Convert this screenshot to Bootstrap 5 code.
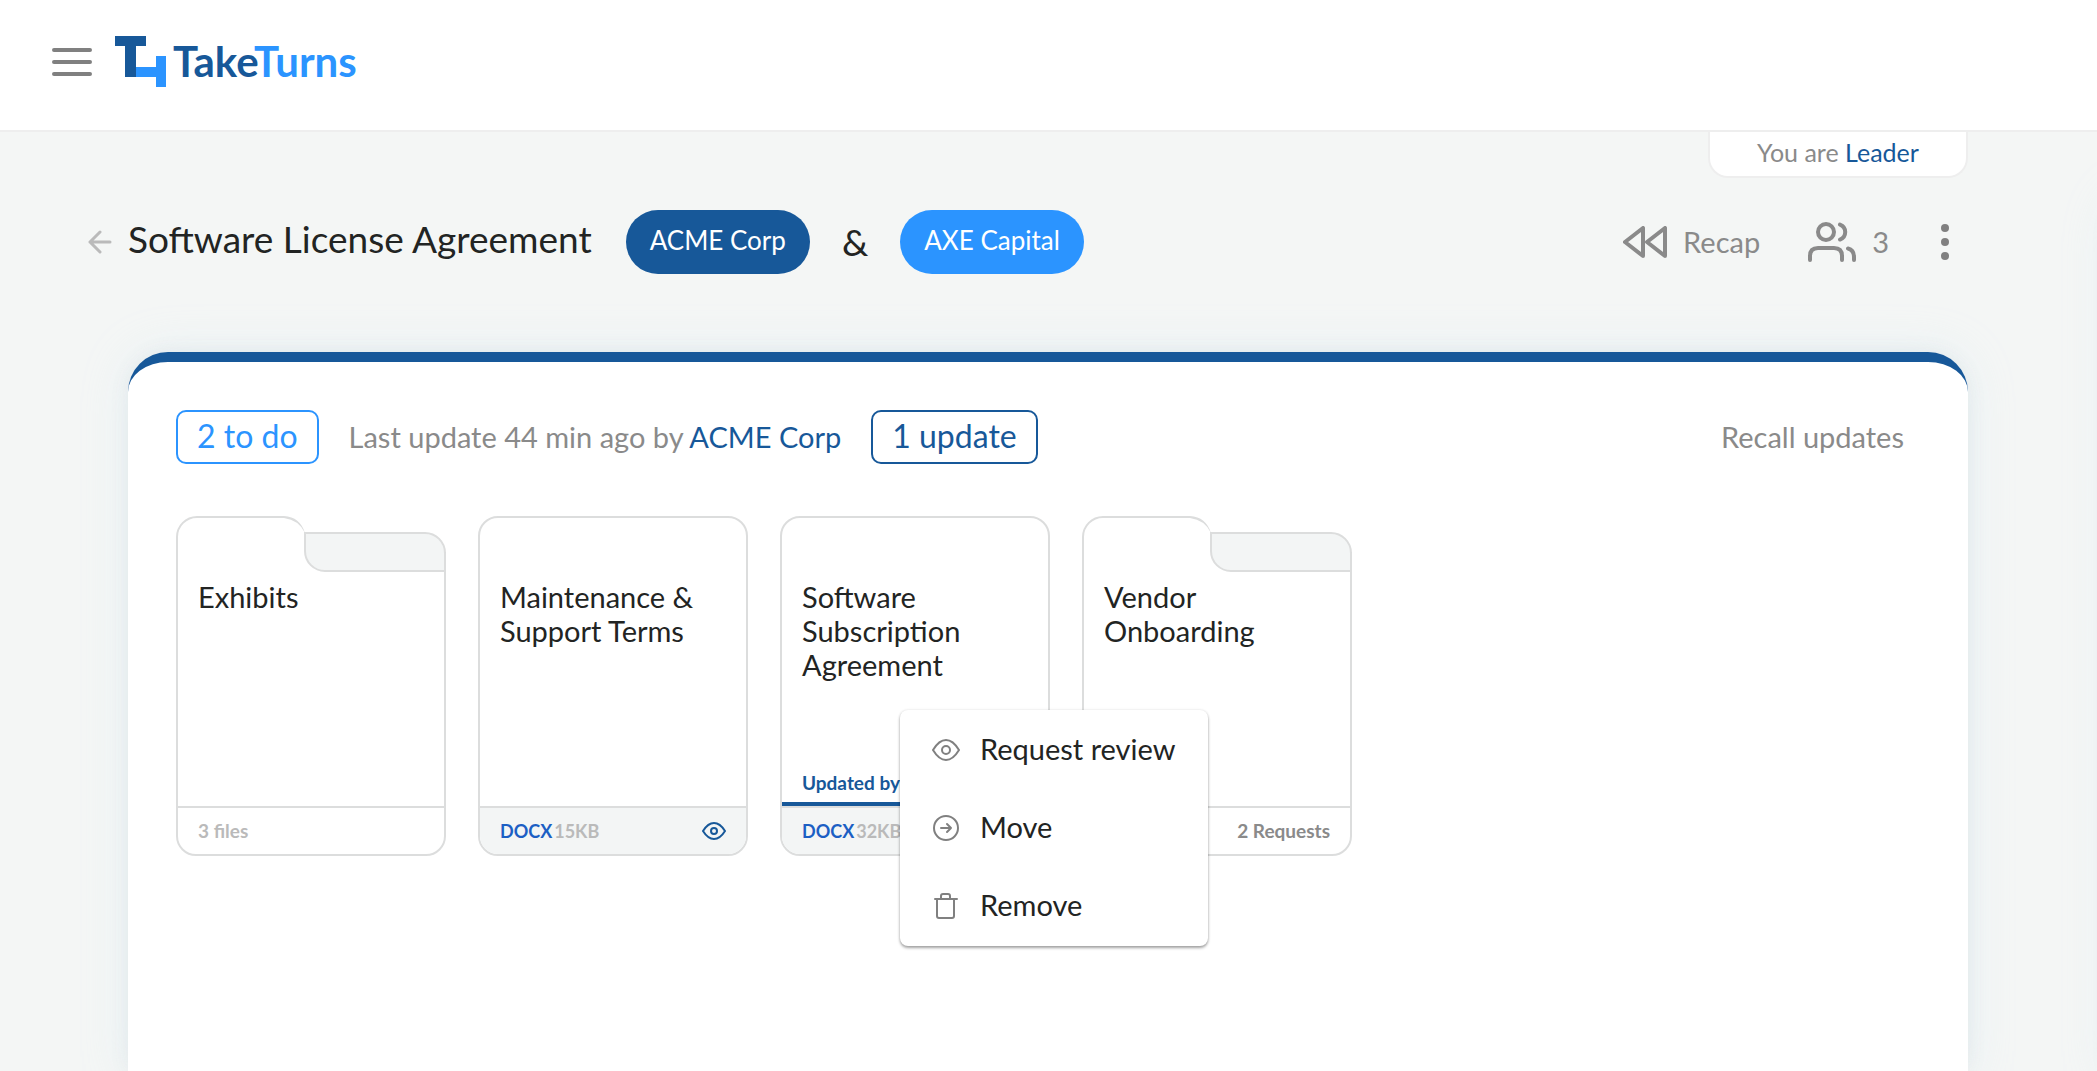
<!DOCTYPE html>
<html lang="en">
<head>
<meta charset="utf-8">
<meta name="viewport" content="width=device-width, initial-scale=1">
<title>TakeTurns - Software License Agreement</title>
<link href="https://cdn.jsdelivr.net/npm/bootstrap@5.3.0/dist/css/bootstrap.min.css" rel="stylesheet">
<style>
:root{--navy:#175899;--sky:#2b94ff;--ink:#222423;--grey:#8a8a8a;--pale:#bababa;--line:#dcdddd;--page:#f4f6f5;--halo:0 0 20px rgba(110,110,100,.08),0 0 44px rgba(225,240,248,.7)}
body{background:var(--page);color:var(--ink);font-family:Lato,"Open Sans",sans-serif;font-size:29px;line-height:34px}
main{position:relative;overflow:hidden}
/* halo of the next board, waiting beyond the right edge */
main::after{content:"";position:absolute;left:calc(100% + 12px);top:60px;bottom:0;width:80px;border-radius:40px 0 0 0;box-shadow:var(--halo)}
a{color:inherit;text-decoration:none}
svg{display:block;flex:none}
.line-icon{fill:none;stroke:currentColor;stroke-linecap:round;stroke-linejoin:round}
.plain{background:none;border:0;padding:0;color:inherit}
.navy{color:var(--navy)}
.soft{color:var(--grey)}
.steel{color:#808080}
.topbar{height:132px;border-bottom:2px solid #eee;padding:0 52px 6px}
.brand-link{gap:7px;margin-left:23px;padding-bottom:2px}
.brand-text{font-size:42px;line-height:48px;font-weight:700;color:var(--navy)}
.brand-text span{color:var(--sky)}
.gutter{padding-left:128px;padding-right:129px}
.role-tab{width:260px;height:46px;border:2px solid #eee;border-top:0;border-radius:0 0 20px 20px;font-size:25px;padding-bottom:4px}
.title-row{padding:32px 144px 0 88px}
.deal-title{font-size:37px;line-height:44px;font-weight:400;padding-bottom:6px;margin-right:34px}
.party{height:64px;border-radius:32px;padding:0 23px 4px;font-size:26px;color:#fff}
.party-navy,.party-navy:hover{background:var(--navy);color:#fff}
.party-sky,.party-sky:hover{background:var(--sky);color:#fff}
.amp{font-size:37px}
.board{margin-top:78px;border-top:10px solid var(--navy);border-radius:40px 40px 0 0;padding:48px 48px 0;box-shadow:var(--halo)}
.tag{height:54px;border:2px solid;border-radius:10px;background:#fff;padding:0 19px 2px;font-size:32px;line-height:40px}
.tag-sky{color:var(--sky)}
.status-text{margin:0 30px}
.files{gap:32px;margin-top:52px}
.doc{width:270px;height:340px;border:2px solid var(--line);border-radius:20px;position:relative}
.doc-body{padding:62px 20px 0}
.doc-foot{height:48px;border-top:2px solid var(--line);padding:0 20px;font-size:19px;font-weight:700;border-radius:0 0 18px 18px}
.filled{background:#f3f5f5;font-size:18px;gap:2px}
.pale{color:var(--pale)}
.docx{color:#1c5fc4}
.updated{font-size:19px;font-weight:700;line-height:24px;padding:0 20px 7px;border-bottom:4px solid var(--navy)}
/* the raised left part and the lowered right part of a folder's top edge */
.flap{position:absolute;left:-2px;top:-2px}
.ctx{position:absolute;left:118px;top:192px;width:308px;padding:1px 0;border:0;border-radius:8px;box-shadow:0 2px 3px rgba(0,0,0,.35),0 0 3px rgba(0,0,0,.1);z-index:5;font-size:29px}
.ctx .dropdown-item{height:78px;padding:0 32px;gap:20px;color:var(--ink)}
.ctx .dropdown-item span{padding-bottom:2px}
.ctx .dropdown-item:hover{background:#f4f6f5}
</style>
<script src="https://cdn.jsdelivr.net/npm/bootstrap@5.3.0/dist/js/bootstrap.bundle.min.js"></script>
</head>
<body class="d-flex flex-column min-vh-100">
<header class="topbar bg-white d-flex align-items-center">
  <button class="plain steel" aria-label="Menu"><svg class="line-icon" width="40" height="28" viewBox="0 0 40 28" stroke-width="4"><path d="M2 2H38M2 14H38M2 26H38"/></svg></button>
  <a href="#" class="brand-link d-flex align-items-center" aria-label="TakeTurns home">
    <svg width="51" height="51" viewBox="0 0 51 51"><path d="M10 31H41V20H51V51H41V41H10Z" fill="#2b94ff"/><path d="M0 0H31V10H21V41H10V10H0Z" fill="#175899"/></svg>
    <span class="brand-text">Take<span>Turns</span></span>
  </a>
</header>
<main class="d-flex flex-column flex-grow-1">
  <div class="gutter d-flex justify-content-end">
    <div class="role-tab bg-white soft d-flex align-items-center justify-content-center"><span>You are <a href="#" class="navy">Leader</a></span></div>
  </div>
  <div class="title-row d-flex align-items-center">
    <a href="#" aria-label="Back" class="pale"><svg class="line-icon" width="24" height="24" viewBox="0 0 24 24" stroke-width="3"><path d="M22 12H2M12 2 2 12 12 22"/></svg></a>
    <h1 class="deal-title mb-0 ms-3">Software License Agreement</h1>
    <button class="btn party party-navy">ACME Corp</button>
    <span class="amp mx-4 px-2">&amp;</span>
    <button class="btn party party-sky">AXE Capital</button>
    <div class="d-flex align-items-center ms-auto soft">
      <button class="plain d-flex align-items-center"><svg class="line-icon" width="44" height="32" viewBox="0 0 44 32" stroke-width="4"><path d="M20 2V30L2 16ZM42 2V30L24 16Z"/></svg><span class="ms-3">Recap</span></button>
      <button class="plain d-flex align-items-center ms-5"><svg class="line-icon" width="48" height="40" viewBox="0 0 48 40" stroke-width="4"><circle cx="18" cy="10" r="8"/><path d="M2 38V34Q2 26 10 26H26Q34 26 34 34V38M32 2.500A8 8 0 0 1 32 17.500M40 26.500Q46 28 46 35V38"/></svg><span class="ms-3">3</span></button>
      <button class="plain ms-5 px-1 steel" aria-label="More"><svg width="8" height="36" viewBox="0 0 8 36" fill="#808080"><circle cx="4" cy="4" r="4"/><circle cx="4" cy="18" r="4"/><circle cx="4" cy="32" r="4"/></svg></button>
    </div>
  </div>
  <div class="gutter d-flex flex-column flex-grow-1">
    <section class="board bg-white flex-grow-1">
      <div class="d-flex align-items-center">
        <button class="tag tag-sky">2 to do</button>
        <span class="status-text soft">Last update 44 min ago by <a href="#" class="navy">ACME Corp</a></span>
        <button class="tag navy">1 update</button>
        <button class="plain soft ms-auto me-3">Recall updates</button>
      </div>
      <div class="files d-flex flex-wrap">
        <article class="doc d-flex flex-column">
          <div class="flap"><svg width="270" height="60" viewBox="0 0 270 60"><path d="M0 0H270V36H0Z" fill="#fff"/><path d="M1 37V21A20 20 0 0 1 21 1H108" fill="none" stroke="#dcdddd" stroke-width="2"/><path d="M108 0Q124 1 129 17Q123 4 108 2Z" fill="#dcdddd"/><path d="M129 17H249A20 20 0 0 1 269 37V55H149A20 20 0 0 1 129 35Z" fill="#f3f5f5" stroke="#dcdddd" stroke-width="2"/></svg></div>
          <div class="doc-body flex-grow-1"><a href="#">Exhibits</a></div>
          <div class="doc-foot d-flex align-items-center pale">3 files</div>
        </article>
        <article class="doc d-flex flex-column">
          <div class="doc-body flex-grow-1"><a href="#">Maintenance &amp; Support Terms</a></div>
          <div class="doc-foot filled d-flex align-items-center"><span class="docx">DOCX</span><span class="pale">15KB</span>
            <svg class="line-icon navy ms-auto" width="24" height="18" viewBox="0 0 24 18" stroke-width="2"><path d="M1 9Q6 1 12 1T23 9Q18 17 12 17T1 9Z"/><circle cx="12" cy="9" r="3"/></svg></div>
        </article>
        <article class="doc d-flex flex-column">
          <div class="doc-body flex-grow-1"><a href="#">Software Subscription Agreement</a></div>
          <div class="updated navy">Updated by</div>
          <div class="doc-foot filled d-flex align-items-center"><span class="docx">DOCX</span><span class="pale">32KB</span></div>
          <div class="dropdown-menu show ctx">
            <button class="dropdown-item d-flex align-items-center"><svg class="line-icon steel" width="28" height="28" viewBox="0 0 28 28" stroke-width="2"><path d="M1 14Q7 4 14 4T27 14Q21 24 14 24T1 14Z"/><circle cx="14" cy="14" r="4"/></svg><span>Request review</span></button>
            <button class="dropdown-item d-flex align-items-center"><svg class="line-icon steel" width="28" height="28" viewBox="0 0 28 28" stroke-width="2"><circle cx="14" cy="14" r="12"/><path d="M9 14H19M15 10 19 14 15 18"/></svg><span>Move</span></button>
            <button class="dropdown-item d-flex align-items-center"><svg class="line-icon steel" width="28" height="28" viewBox="0 0 28 28" stroke-width="2"><path d="M3 7H25M5 7V24Q5 26 7 26H20Q22 26 22 24V7M9 7V4Q9 2 11 2H16Q18 2 18 4V7"/></svg><span>Remove</span></button>
          </div>
        </article>
        <article class="doc d-flex flex-column">
          <div class="flap"><svg width="270" height="60" viewBox="0 0 270 60"><path d="M0 0H270V36H0Z" fill="#fff"/><path d="M1 37V21A20 20 0 0 1 21 1H108" fill="none" stroke="#dcdddd" stroke-width="2"/><path d="M108 0Q124 1 129 17Q123 4 108 2Z" fill="#dcdddd"/><path d="M129 17H249A20 20 0 0 1 269 37V55H149A20 20 0 0 1 129 35Z" fill="#f3f5f5" stroke="#dcdddd" stroke-width="2"/></svg></div>
          <div class="doc-body flex-grow-1"><a href="#">Vendor Onboarding</a></div>
          <div class="doc-foot d-flex align-items-center justify-content-end soft">2 Requests</div>
        </article>
      </div>
    </section>
  </div>
</main>
</body>
</html>
